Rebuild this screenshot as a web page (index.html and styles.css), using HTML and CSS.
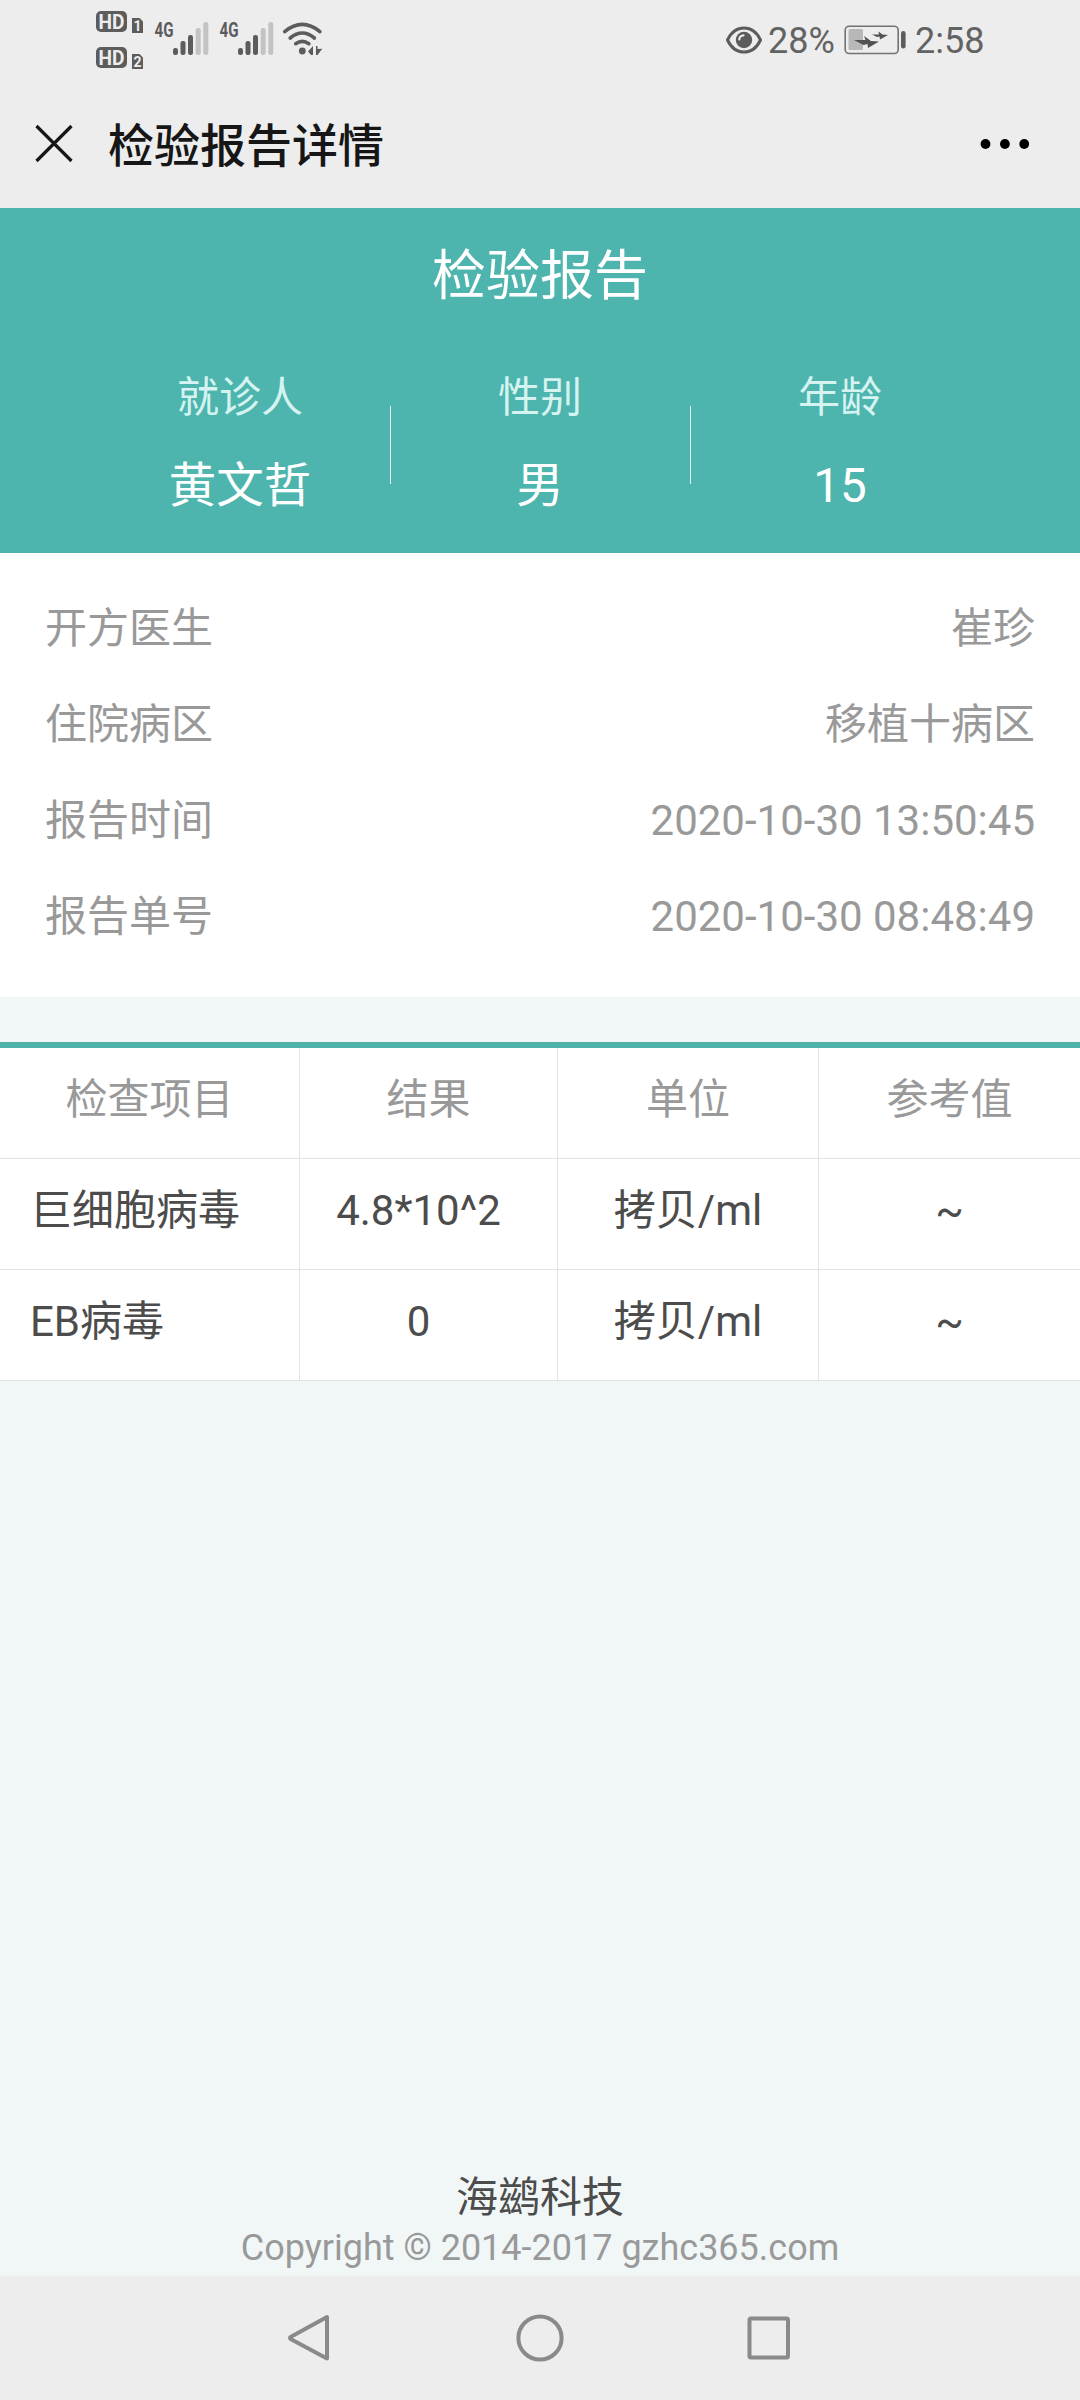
FILE: index.html
```
<!DOCTYPE html>
<html lang="zh-CN">
<head>
    <meta charset="UTF-8">
    <meta name="viewport" content="width=device-width, initial-scale=1.0">
    <title>检验报告详情</title>
    <link rel="stylesheet" href="styles.css">
</head>
<body>

    <!-- Status bar -->
    <div class="status-bar">
        <svg class="status-left" width="230" height="80" viewBox="95 0 230 80">
            <g fill="#5c5c5c">
                <rect x="96" y="11" width="31" height="21" rx="5"/>
                <rect x="96" y="47" width="31" height="21" rx="5"/>
                <path d="M132 18h7.500l3.500 3.500v11.500h-11z"/>
                <path d="M132 54h7.500l3.500 3.500v11.500h-11z"/>
            </g>
            <g class="badge-text">
                <text x="98.500" y="28.500" font-size="20" textLength="26" lengthAdjust="spacingAndGlyphs">HD</text>
                <text x="98.500" y="64.500" font-size="20" textLength="26" lengthAdjust="spacingAndGlyphs">HD</text>
                <text x="133.500" y="31" font-size="14">1</text>
                <text x="133.500" y="67" font-size="14">2</text>
            </g>
            <g class="net-text">
                <text x="154.500" y="37" textLength="19" lengthAdjust="spacingAndGlyphs">4G</text>
                <text x="219.500" y="37" textLength="19" lengthAdjust="spacingAndGlyphs">4G</text>
            </g>
            <g id="signal" fill="#5c5c5c">
                <rect x="173" y="48" width="5" height="7" rx="2.200"/>
                <rect x="180.500" y="41" width="5" height="14" rx="2.200"/>
                <rect x="188" y="35" width="5" height="20" rx="2.200"/>
                <rect x="195.700" y="28" width="5" height="27" rx="2.200" fill="#c3c3c3"/>
                <rect x="203.300" y="22" width="5" height="33" rx="2.200" fill="#c3c3c3"/>
            </g>
            <use href="#signal" x="65"/>
            <g fill="none" stroke="#5c5c5c" stroke-width="3.600" stroke-linecap="round">
                <path d="M284.700 31.600Q302.300 17.200 319.900 31.600"/>
                <path d="M290.200 38Q302.300 28 314.400 38"/>
                <path d="M295.700 43.700Q302.300 39.200 308.900 43.700"/>
            </g>
            <g fill="#5c5c5c">
                <circle cx="302.300" cy="51" r="3.400"/>
                <path d="M308 51.500l5-5.500v9h-2z"/>
                <path d="M316 46h1.500v3l4.800-0.300-4.800 6.300h-1.500z"/>
            </g>
        </svg>
        <div class="status-right">
            <svg width="38" height="30" viewBox="725 24.500 38 30">
                <path d="M727.500 39.500C735 23.500 753 23.500 760.500 39.500C753 55.500 735 55.500 727.500 39.500Z" fill="none" stroke="#5c5c5c" stroke-width="3"/>
                <circle cx="744" cy="39.500" r="8.200" fill="#5c5c5c"/>
                <path d="M739.300 39a4.200 4.200 0 0 1 4.200-4.200" fill="none" stroke="#ededed" stroke-width="2.200" stroke-linecap="round"/>
            </svg>
            <span class="battery-text">28%</span>
            <svg class="battery" width="62" height="30" viewBox="843 25 62 30">
                <rect x="844.200" y="26.200" width="53" height="27.300" rx="4" fill="none" stroke="#737373" stroke-width="1.600"/>
                <rect x="847.500" y="29" width="14.500" height="21" rx="1.500" fill="#b8b8b8"/>
                <path d="M853 40l11.500 0-1.500-4 7 5 8 0.500-11 6.500-0.500-4-4 1z" fill="#525252"/>
                <path d="M871 34.500l7 0-0.500-3 4 3 5.500 0.500-8 4.500-0.500-3-2.500 0.500z" fill="#525252"/>
                <rect x="900" y="31" width="4.600" height="17.500" rx="2.300" fill="#5c5c5c"/>
            </svg>
            <span class="clock">2:58</span>
        </div>
    </div>

    <!-- Page title bar -->
    <div class="title-bar">
        <svg width="40" height="40" viewBox="0 0 40 40">
            <path d="M2.500 2L37.500 37M37.500 2L2.500 37" stroke="#161616" stroke-width="3.200"/>
        </svg>
        <span class="title">检验报告详情</span>
        <svg class="more" width="50" height="12" viewBox="0 0 50 12">
            <circle cx="5.500" cy="6" r="4.900"/>
            <circle cx="24.900" cy="6" r="4.900"/>
            <circle cx="44.200" cy="6" r="4.900"/>
        </svg>
    </div>

    <!-- Patient header -->
    <div class="header">
        <h1>检验报告</h1>
        <div class="patient">
            <div class="patient-item">
                <div class="label">就诊人</div>
                <div class="value">黄文哲</div>
            </div>
            <div class="divider"></div>
            <div class="patient-item">
                <div class="label">性别</div>
                <div class="value">男</div>
            </div>
            <div class="divider"></div>
            <div class="patient-item">
                <div class="label">年龄</div>
                <div class="value">15</div>
            </div>
        </div>
    </div>

    <!-- Report info -->
    <div class="info">
        <div class="info-row"><span>开方医生</span><span>崔珍</span></div>
        <div class="info-row"><span>住院病区</span><span>移植十病区</span></div>
        <div class="info-row"><span>报告时间</span><span>2020-10-30 13:50:45</span></div>
        <div class="info-row"><span>报告单号</span><span>2020-10-30 08:48:49</span></div>
    </div>

    <!-- Results -->
    <table class="results">
        <thead>
            <tr><th class="name">检查项目</th><th class="result">结果</th><th class="unit">单位</th><th>参考值</th></tr>
        </thead>
        <tbody>
            <tr><td class="name">巨细胞病毒</td><td class="result">4.8*10^2</td><td>拷贝/ml</td><td>~</td></tr>
            <tr><td class="name">EB病毒</td><td class="result">0</td><td>拷贝/ml</td><td>~</td></tr>
        </tbody>
    </table>

    <!-- Footer -->
    <div class="footer">
        <div class="company">海鹚科技</div>
        <div class="copyright">Copyright © 2014-2017 gzhc365.com</div>
    </div>

    <!-- System navigation -->
    <div class="nav-bar">
        <svg width="48" height="48" viewBox="0 0 48 48"><path d="M40 3V44.500L4 25.300Q2 24 4 22.700Z"/></svg>
        <svg width="48" height="48" viewBox="0 0 48 48"><circle cx="24" cy="24" r="21.600"/></svg>
        <svg width="48" height="48" viewBox="0 0 48 48"><rect x="4.500" y="4.500" width="38.500" height="39" rx="1.500"/></svg>
    </div>

</body>
</html>
```
FILE: styles.css
```
* {
    box-sizing: border-box;
}

body {
    margin: 0;
    width: 1080px;
    height: 2400px;
    display: flex;
    flex-direction: column;
    font-family: Roboto, "Noto Sans CJK SC", sans-serif;
    font-size: 42px;
    background-color: #f1f7f7;
    overflow: hidden;
}

svg {
    display: block;
    flex: none;
}

/* Status bar */
.status-bar {
    height: 80px;
    padding: 0 96px 0 95px;
    display: flex;
    justify-content: space-between;
    background-color: #ededed;
    color: #636363;
}

.badge-text {
    fill: #ededed;
    font-weight: 700;
}

.net-text {
    fill: #5c5c5c;
    font-size: 21px;
    font-weight: 700;
}

.status-right {
    display: flex;
    align-items: center;
    height: 79px;
    font-size: 36px;
    font-weight: 400;
}

.battery-text {
    width: 67px;
    margin: 2px 9px 0 5px;
}

.clock {
    width: 69px;
    margin: 2px 0 0 9px;
}

/* Title bar */
.title-bar {
    height: 128px;
    padding: 0 50px 0 34px;
    display: flex;
    align-items: center;
    background-color: #ededed;
    color: #161616;
}

.title {
    margin-left: 34px;
    padding-top: 3px;
    font-size: 46px;
    font-weight: 500;
    line-height: 54px;
}

.more {
    margin-left: auto;
}

/* Patient header */
.header {
    height: 345px;
    background-color: #4db5ad;
    color: #fff;
    text-align: center;
}

.header h1 {
    margin: 0;
    padding-top: 27px;
    font-size: 54px;
    font-weight: 400;
    line-height: 84px;
}

.patient {
    display: flex;
    justify-content: center;
    align-items: center;
    padding-top: 37px;
}

.patient-item {
    width: 299px;
}

.patient .label {
    line-height: 84px;
    color: #d5f3f0;
}

.patient .value {
    font-size: 47.5px;
    line-height: 92px;
}

.divider {
    width: 1px;
    height: 78px;
    margin-top: 1px;
    background-color: #e4f6f4;
}

/* Report info */
.info {
    height: 444px;
    padding: 28px 45px 0;
    background-color: #fff;
    color: #999;
}

.info-row {
    display: flex;
    justify-content: space-between;
    line-height: 96px;
}

/* Results table */
.results {
    width: 1080px;
    margin-top: 45px;
    table-layout: fixed;
    border-collapse: separate;
    border-spacing: 0;
    border-top: 6px solid #50b3ab;
    background-color: #fff;
    color: #4c4c4c;
}

.results th,
.results td {
    height: 111px;
    padding: 0 0 6px;
    border-right: 1px solid #e3e3e3;
    border-bottom: 1px solid #e3e3e3;
    font-weight: 400;
    line-height: 50px;
    text-align: center;
    white-space: nowrap;
}

.results th {
    color: #999;
}

.results th:last-child,
.results td:last-child {
    border-right: none;
}

.results th.name {
    width: 300px;
}

.results th.result {
    width: 258px;
}

.results th.unit {
    width: 261px;
}

.results td.name {
    padding-left: 30px;
    text-align: left;
}

.results td.result {
    padding-right: 20px;
}

/* Footer */
.footer {
    margin-top: auto;
    height: 110px;
    text-align: center;
}

.company {
    line-height: 64px;
    color: #4c4c4c;
}

.copyright {
    font-size: 36px;
    line-height: 36px;
    color: #999;
}

/* System navigation */
.nav-bar {
    height: 124px;
    padding: 0 287px;
    display: flex;
    justify-content: space-between;
    align-items: center;
    background-color: #ededed;
}

.nav-bar svg {
    fill: none;
    stroke: #8a8a8a;
    stroke-width: 4;
    stroke-linejoin: round;
}
```
